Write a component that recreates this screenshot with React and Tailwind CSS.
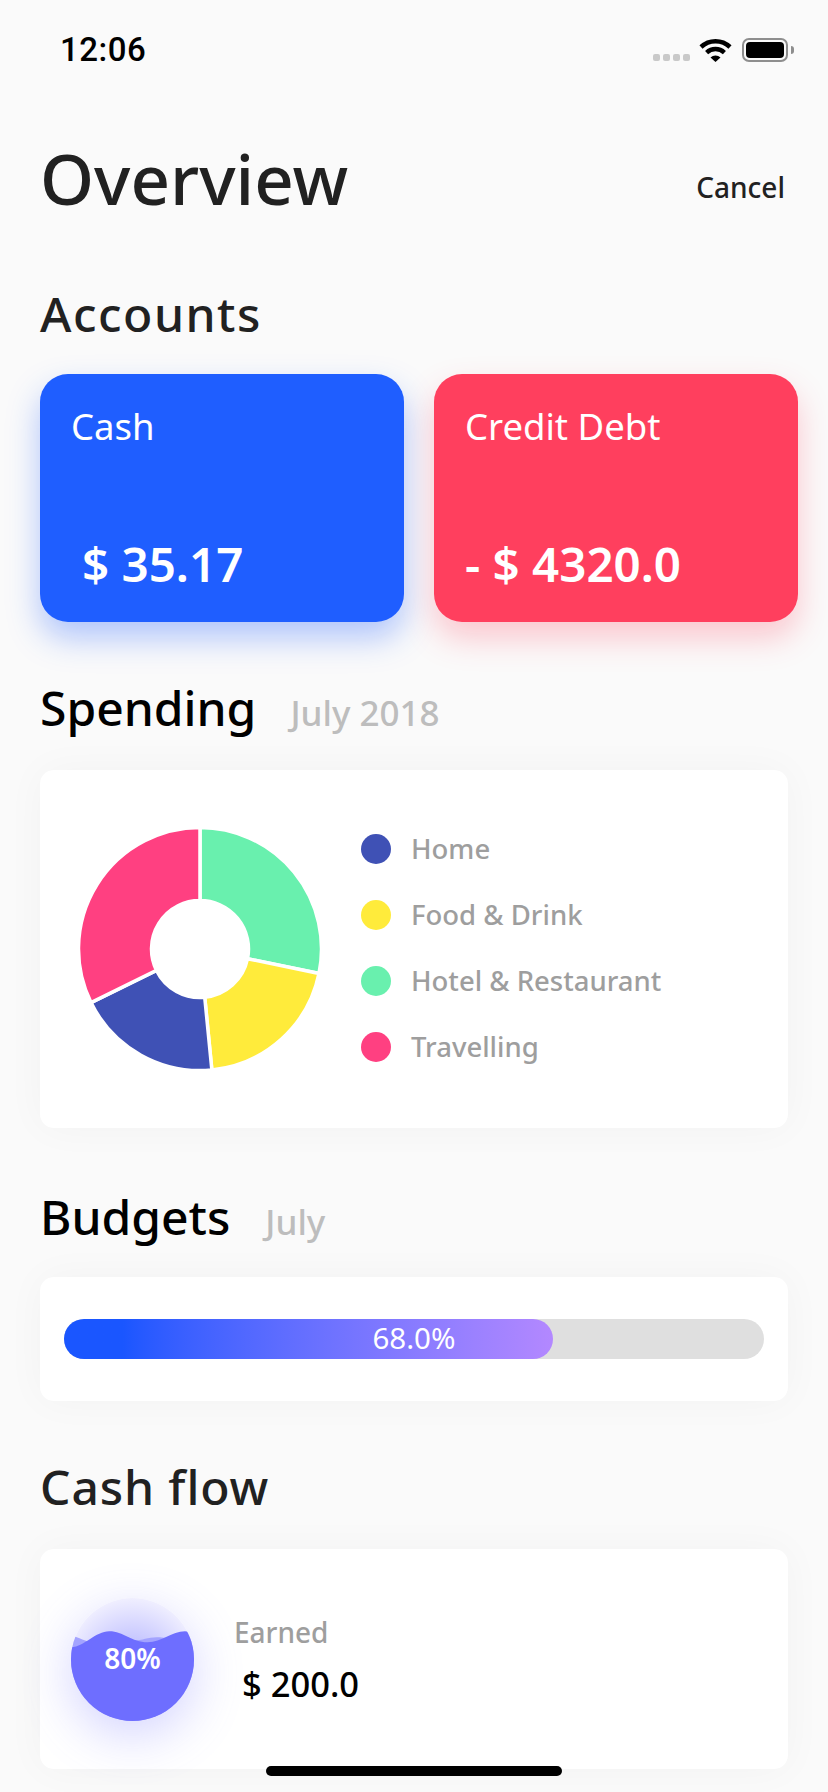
import React from "react";

const legend = [
  { label: "Home", dot: "bg-[#3f51b5]" },
  { label: "Food & Drink", dot: "bg-[#ffeb3b]" },
  { label: "Hotel & Restaurant", dot: "bg-[#69f0ae]" },
  { label: "Travelling", dot: "bg-[#ff4081]" },
];

const slices = [
  { from: 0, to: 101.6, color: "#69f0ae" },
  { from: 101.6, to: 174.4, color: "#ffeb3b" },
  { from: 174.4, to: 243.8, color: "#3f51b5" },
  { from: 243.8, to: 360, color: "#ff4081" },
];

function point(r, deg) {
  const a = (deg * Math.PI) / 180;
  return `${(123 + r * Math.sin(a)).toFixed(2)} ${(123 - r * Math.cos(a)).toFixed(2)}`;
}

function slicePath(from, to) {
  const large = to - from > 180 ? 1 : 0;
  return `M${point(48.5, from)} L${point(121.5, from)} A121.5 121.5 0 ${large} 1 ${point(121.5, to)} L${point(48.5, to)} A48.5 48.5 0 ${large} 0 ${point(48.5, from)} Z`;
}

function Donut() {
  return (
    <svg width="246" height="246" viewBox="0 0 246 246" className="shrink-0">
      {slices.map((s) => (
        <path key={s.color} d={slicePath(s.from, s.to)} fill={s.color} stroke="#ffffff" strokeWidth="3.5" />
      ))}
    </svg>
  );
}

function StatusBar() {
  return (
    <div className="h-[88px] pl-[60px] pr-[34px] flex items-center justify-between pt-[12px]">
      <span className="text-[33px] font-medium text-black font-['Roboto',sans-serif] tracking-[0.5px]">12:06</span>
      <div className="flex items-center">
        <div className="flex gap-[3px] mt-[14px] mr-[9px]">
          {[0, 1, 2, 3].map((i) => (
            <span key={i} className="w-[7px] h-[7px] rounded-[2px] bg-[#c9c9c9]" />
          ))}
        </div>
        <svg width="33" height="24" viewBox="0 0 33 24" fill="none" className="mr-[10px]">
          <path d="M2 9 A21 21 0 0 1 31 9" stroke="#000" strokeWidth="4.5" />
          <path d="M7.6 14.6 A13 13 0 0 1 25.4 14.6" stroke="#000" strokeWidth="4.5" />
          <path d="M16.5 24 L11.5 19.4 A7.5 7.5 0 0 1 21.5 19.4 Z" fill="#000" />
        </svg>
        <div className="w-[46px] h-[24px] rounded-[7px] border-2 border-[#8e8e8e] p-[2px]">
          <div className="w-full h-full rounded-[4px] bg-black" />
        </div>
        <div className="w-[3px] h-[8px] ml-[3px] rounded-r-[3px] bg-[#8e8e8e]" />
      </div>
    </div>
  );
}

function AccountCard({ title, amount, color, amountIndent }) {
  return (
    <div className={`w-[364px] h-[248px] shrink-0 rounded-[28px] pl-[31px] pt-[29px] text-white flex flex-col ${color}`}>
      <div className="text-[36.5px] leading-[46px]">{title}</div>
      <div className={`text-[47.5px] leading-[60px] font-semibold mt-[85px] ${amountIndent}`}>{amount}</div>
    </div>
  );
}

function SectionTitle({ title, sub, subGap }) {
  return (
    <div className="flex items-baseline h-[60px] px-[40px]">
      <span className="text-[48px] leading-[60px] font-medium text-black">{title}</span>
      {sub && <span className={`text-[35px] leading-[60px] font-medium text-[#bdbdbd] ${subGap}`}>{sub}</span>}
    </div>
  );
}

function WaveBall() {
  return (
    <div className="w-[123px] h-[123px] rounded-full shrink-0 shadow-[0_14px_50px_rgba(110,110,255,0.3)]">
      <svg width="123" height="123" viewBox="0 0 122 122">
        <defs>
          <radialGradient id="ballGlow" cx="50%" cy="55%" r="55%">
            <stop offset="40%" stopColor="#c8c8ff" />
            <stop offset="100%" stopColor="#f0efff" />
          </radialGradient>
          <clipPath id="ballClip">
            <circle cx="61" cy="61" r="61" />
          </clipPath>
        </defs>
        <circle cx="61" cy="61" r="61" fill="url(#ballGlow)" />
        <g clipPath="url(#ballClip)">
          <path d="M0 37 C8 39 14 44 24 44 C38 44 50 42 62 42 C72 42 78 38 88 39 C98 40 106 42 122 38 L122 122 L0 122 Z" fill="#a3a3ff" />
          <path d="M0 49 C14 48 24 33 38 33 C52 33 60 44 76 44 C90 44 100 33 113 33 C118 33 120 36 122 40 L122 122 L0 122 Z" fill="#6e6eff" />
        </g>
      </svg>
    </div>
  );
}

export default function App() {
  return (
    <div className="relative w-[828px] h-[1792px] overflow-hidden bg-[#fafafa] font-['Noto_Sans',sans-serif]">
      <StatusBar />

      <div className="flex items-center justify-between h-[80px] mt-[50px] pl-[40px] pr-[43px]">
        <h1 className="text-[69px] leading-[80px] font-medium text-[#212121]">Overview</h1>
        <span className="text-[28px] font-medium text-[#212121] mt-[18px]">Cancel</span>
      </div>

      <div className="mt-[71px] px-[40px] text-[48px] leading-[50px] font-medium tracking-[1.5px] text-[#212121]">Accounts</div>

      <div className="flex gap-[30px] pl-[40px] mt-[35px]">
        <AccountCard title="Cash" amount="$ 35.17" color="bg-[#1f5eff] shadow-[0_16px_32px_rgba(31,94,255,0.34)]" amountIndent="ml-[11px]" />
        <AccountCard title="Credit Debt" amount="- $ 4320.0" color="bg-[#ff3f5e] shadow-[0_16px_32px_rgba(255,63,94,0.28)]" amountIndent="" />
      </div>

      <div className="mt-[56px]">
        <SectionTitle title="Spending" sub="July 2018" subGap="ml-[34px]" />
      </div>

      <div className="mx-[40px] mt-[32px] h-[358px] rounded-[14px] bg-white shadow-[0_0_40px_rgba(0,0,0,0.035)] flex items-center pl-[37px] pr-[20px]">
        <Donut />
        <div className="ml-[38px] flex flex-col gap-[36px] -mt-[2px]">
          {legend.map((item) => (
            <div key={item.label} className="flex items-center h-[30px]">
              <span className={`w-[30px] h-[30px] rounded-full shrink-0 ${item.dot}`} />
              <span className="ml-[20px] text-[27.5px] leading-[30px] font-medium text-[#9e9e9e]">{item.label}</span>
            </div>
          ))}
        </div>
      </div>

      <div className="mt-[59px]">
        <SectionTitle title="Budgets" sub="July" subGap="ml-[35px]" />
      </div>

      <div className="mx-[40px] mt-[30px] h-[124px] rounded-[14px] bg-white shadow-[0_0_40px_rgba(0,0,0,0.035)] flex items-center px-[24px]">
        <div className="relative w-full h-[40px] rounded-full bg-[#dfdfdf]">
          <div className="w-[489px] h-full rounded-full bg-gradient-to-r from-[#1a56ff] from-[12%] to-[#b388ff]" />
          <div className="absolute inset-0 flex items-center justify-center pb-[2px] text-[29.5px] text-white">68.0%</div>
        </div>
      </div>

      <div className="mt-[56px] px-[40px] text-[48px] leading-[60px] font-medium tracking-[0.9px] text-[#212121]">Cash flow</div>

      <div className="mx-[40px] mt-[32px] h-[220px] rounded-[14px] bg-white shadow-[0_0_40px_rgba(0,0,0,0.035)] flex items-center pl-[31px]">
        <div className="relative">
          <WaveBall />
          <div className="absolute inset-0 flex items-center justify-center pb-[2px] text-[28px] font-semibold text-white">80%</div>
        </div>
        <div className="ml-[40px]">
          <div className="text-[28px] leading-[40px] font-medium text-[#9e9e9e]">Earned</div>
          <div className="text-[34.5px] leading-[44px] font-medium text-black ml-[8px] mt-[10px]">$ 200.0</div>
        </div>
      </div>

      <div className="absolute left-[266px] bottom-[16px] w-[296px] h-[10px] rounded-full bg-black" />
    </div>
  );
}
